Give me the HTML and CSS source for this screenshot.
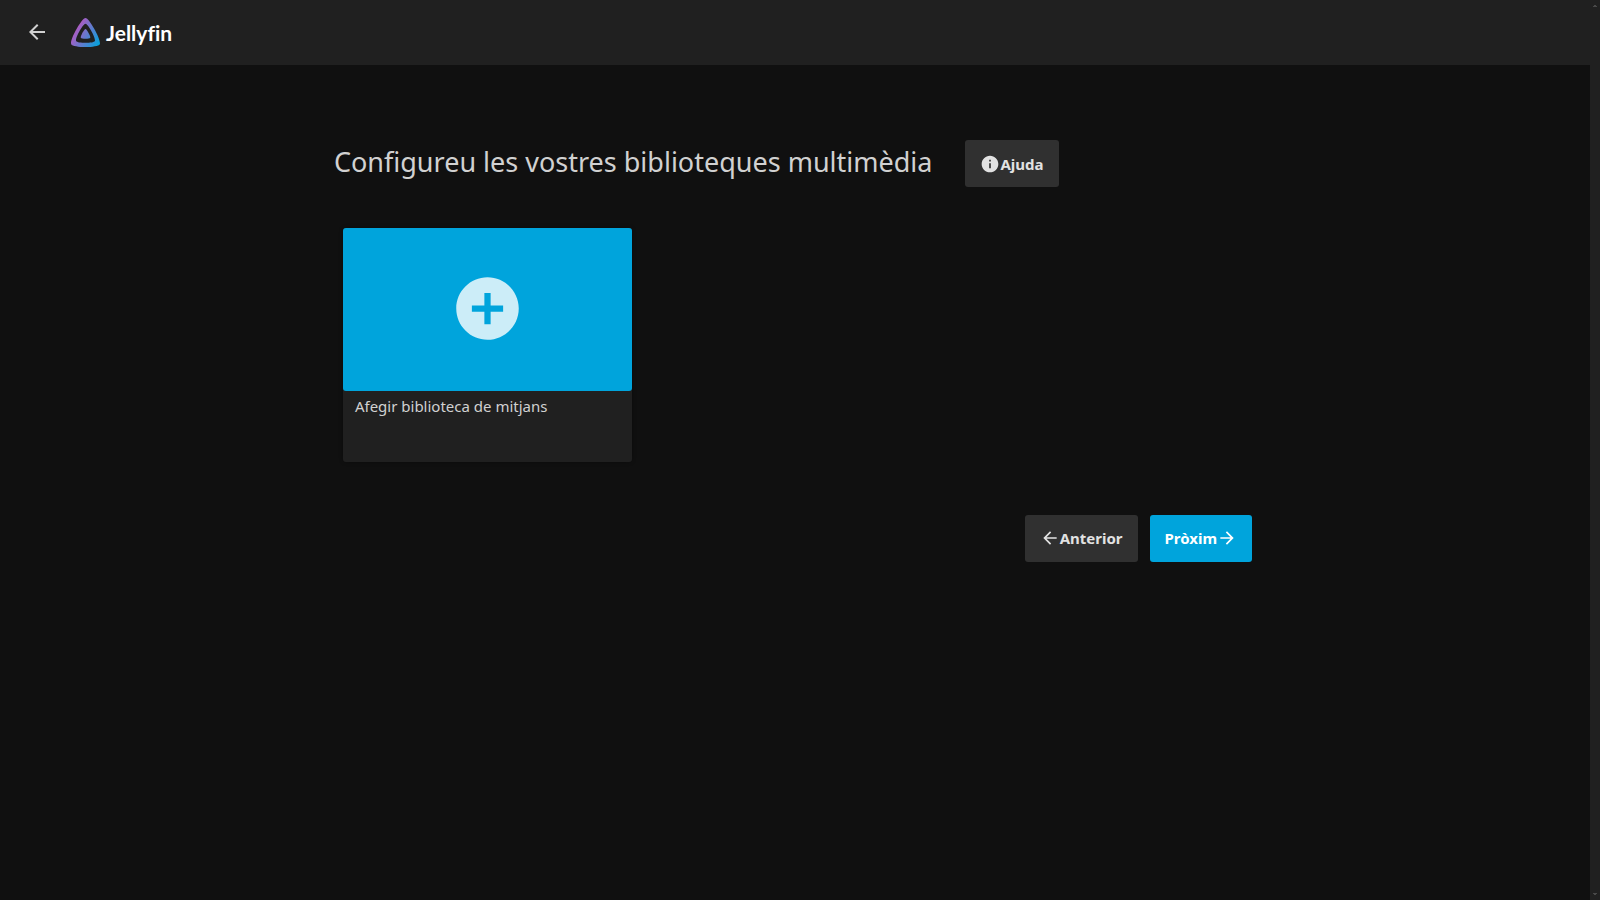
FILE: index.html
```html
<!DOCTYPE html>
<html lang="ca">
<head>
<meta charset="utf-8">
<title>Jellyfin</title>
<link rel="stylesheet" href="styles.css">
</head>
<body>
<div class="page">
  <header class="header">
    <button class="back" type="button" aria-label="Enrere">
      <svg class="icon-back" viewBox="0 0 24 24"><path d="M20 11H7.83l5.59-5.59L12 4l-8 8 8 8 1.41-1.41L7.83 13H20v-2z"/></svg>
    </button>
    <a class="logo" href="#">
      <svg class="logo-mark" viewBox="56 56 400 400" aria-hidden="true">
        <defs><linearGradient id="brand" gradientUnits="userSpaceOnUse" x1="126.15" y1="219.32" x2="457.68" y2="410.73"><stop offset="0" stop-color="#aa5cc3"/><stop offset="1" stop-color="#00a4dc"/></linearGradient></defs>
        <path fill="url(#brand)" d="M190.56 329.07c8.63 17.3 122.4 17.12 130.93 0 8.52-17.1-47.9-119.78-65.46-119.8-17.57 0-74.1 102.5-65.47 119.8z"/>
        <path fill="url(#brand)" d="M58.75 417.03c25.97 52.15 368.86 51.55 394.55 0S308.93 56.08 256.03 56.08c-52.92 0-223.25 308.8-197.28 360.95zm68.04-45.25c-17.02-34.18 94.6-236.5 129.26-236.5 34.67 0 146.1 202.7 129.26 236.5-16.83 33.8-241.5 34.17-258.52 0z"/>
      </svg>
      <span class="logo-name">Jellyfin</span>
    </a>
  </header>
  <main class="content">
    <div class="title-row">
      <h1 class="title">Configureu les vostres biblioteques multimèdia</h1>
      <a class="button" href="#">
        <svg class="icon" viewBox="0 0 24 24"><path d="M12 2C6.48 2 2 6.48 2 12s4.48 10 10 10 10-4.48 10-10S17.52 2 12 2zm1 15h-2v-6h2v6zm0-8h-2V7h2v2z"/></svg>
        <span>Ajuda</span>
      </a>
    </div>
    <div class="libraries">
      <button class="card" type="button">
        <span class="card-image">
          <svg class="icon-add" viewBox="0 0 24 24"><path d="M12 2C6.48 2 2 6.48 2 12s4.48 10 10 10 10-4.48 10-10S17.52 2 12 2zm5 11h-4v4h-2v-4H7v-2h4V7h2v4h4v2z"/></svg>
        </span>
        <span class="card-footer">Afegir biblioteca de mitjans</span>
      </button>
    </div>
    <div class="wizard-nav">
      <button class="button" type="button">
        <svg class="icon" viewBox="0 0 24 24"><path d="M20 11H7.83l5.59-5.59L12 4l-8 8 8 8 1.41-1.41L7.83 13H20v-2z"/></svg>
        <span>Anterior</span>
      </button>
      <button class="button button-submit" type="button">
        <span>Pròxim</span>
        <svg class="icon" viewBox="0 0 24 24"><path d="M12 4l-1.41 1.41L16.17 11H4v2h12.17l-5.58 5.59L12 20l8-8z"/></svg>
      </button>
    </div>
  </main>
</div>
<div class="scroll-track" aria-hidden="true">
  <svg class="scroll-arrow" viewBox="0 0 4 2"><path d="M1 0h2v1h1v1H0V1h1z"/></svg>
  <svg class="scroll-arrow" viewBox="0 0 4 2"><path d="M0 0h4v1H3v1H1V1H0z"/></svg>
</div>
</body>
</html>
```
FILE: styles.css
```css
* {
  box-sizing: border-box;
}

body {
  margin: 0;
  min-height: 100vh;
  display: flex;
  background: #101010;
  color: #d1d1d1;
  font-family: "Noto Sans", sans-serif;
  font-size: 15px;
  line-height: 20px;
}

button {
  font: inherit;
  color: inherit;
  border: 0;
  padding: 0;
  cursor: pointer;
}

a {
  color: inherit;
  text-decoration: none;
}

svg {
  display: block;
  flex: none;
  fill: currentColor;
}

.page {
  flex: 1;
}

.header {
  display: flex;
  align-items: center;
  gap: 12px;
  height: 65px;
  padding: 0 15px;
  background: #202020;
}

.back {
  padding: 9px 10px 11px;
  background: none;
}

.icon-back {
  width: 24px;
  height: 24px;
}

.logo {
  display: flex;
  align-items: center;
  gap: 6px;
  color: #fff;
}

.logo-mark {
  width: 29px;
  height: 29px;
}

.logo-name {
  font-family: Lato, sans-serif;
  font-size: 21px;
  font-weight: 700;
  font-variant-ligatures: none;
  line-height: 28px;
}

.content {
  width: 58%;
  margin: 0 auto;
  padding-top: 75px;
}

.title-row {
  display: flex;
  align-items: center;
  gap: 33px;
}

.title {
  margin: 0;
  padding-bottom: 4px;
  font-size: 27px;
  font-weight: 400;
  line-height: 36px;
}

.button {
  display: flex;
  align-items: center;
  height: 47px;
  padding: 0 15px;
  border-radius: 3px;
  background: #303030;
  color: #e2e2e2;
  font-weight: 700;
}

.icon {
  width: 20px;
  height: 20px;
}

.button-submit {
  background: #00a4dc;
  color: #fff;
}

.libraries {
  display: grid;
  grid-template-columns: repeat(3, 1fr);
  gap: 18px;
  padding: 41px 9px 0;
}

.card {
  display: flex;
  flex-direction: column;
  border-radius: 3px;
  background: #202020;
  box-shadow: 0 0 4px #00000050;
  text-align: left;
}

.card-image {
  display: flex;
  align-items: center;
  justify-content: center;
  width: 100%;
  aspect-ratio: 16 / 9;
  padding-bottom: 1px;
  border-radius: 3px;
  background: #00a4dc;
  color: #ccedf8;
}

.icon-add {
  width: 75px;
  height: 75px;
}

.card-footer {
  padding: 5px 12px 46px;
}

.wizard-nav {
  display: flex;
  justify-content: flex-end;
  gap: 12px;
  padding: 53px 4px 0;
}

.scroll-track {
  display: flex;
  flex-direction: column;
  justify-content: space-between;
  align-items: center;
  width: 10px;
  padding: 5px 0;
  background: #202020;
  color: #484848;
}

.scroll-arrow {
  width: 4px;
  height: 2px;
}
```
